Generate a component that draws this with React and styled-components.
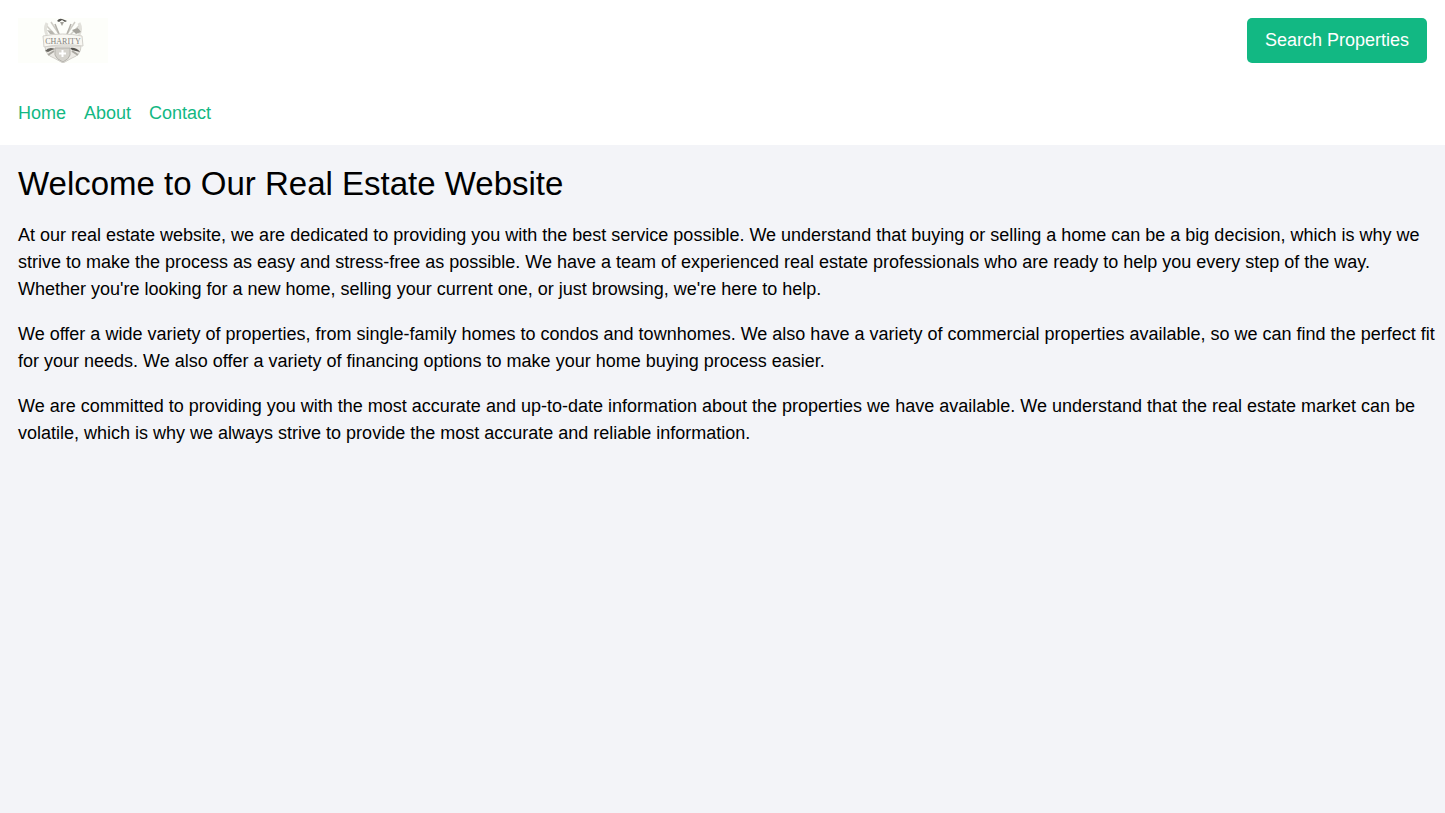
import * as React from 'react';
import styled, { createGlobalStyle } from 'styled-components';

const GlobalStyle = createGlobalStyle`
  *, *::before, *::after {
    box-sizing: border-box;
  }

  html {
    background-color: #f3f4f8;
  }

  body {
    margin: 0;
    color: #000;
    font-family: "Liberation Sans", Arial, sans-serif;
    font-size: 18px;
    line-height: 27px;
  }
`;

const Header = styled.header`
  background-color: #fff;
`;

const TopBar = styled.div`
  display: flex;
  align-items: center;
  justify-content: space-between;
  padding: 18px;
`;

const Logo = styled.svg`
  display: block;
  width: 90px;
  height: 45px;
`;

const SearchButton = styled.button`
  padding: 9px 18px;
  border: 0;
  border-radius: 5px;
  background-color: #12b883;
  color: #fff;
  font: inherit;
  cursor: pointer;
`;

const Nav = styled.nav`
  display: flex;
  gap: 18px;
  padding: 19px 18px 18px;
`;

const NavLink = styled.a`
  color: #12b883;
  text-decoration: none;
`;

const Main = styled.main`
  padding: 18px 9px 18px 18px;
`;

const Title = styled.h1`
  margin: 0 0 18px;
  font-size: 33px;
  font-weight: 400;
  line-height: 41px;
`;

const Paragraph = styled.p`
  margin: 0 0 18px;
`;

const LINKS = ['Home', 'About', 'Contact'];

const PARAGRAPHS = [
  "At our real estate website, we are dedicated to providing you with the best service possible. We understand that buying or selling a home can be a big decision, which is why we strive to make the process as easy and stress-free as possible. We have a team of experienced real estate professionals who are ready to help you every step of the way. Whether you're looking for a new home, selling your current one, or just browsing, we're here to help.",
  'We offer a wide variety of properties, from single-family homes to condos and townhomes. We also have a variety of commercial properties available, so we can find the perfect fit for your needs. We also offer a variety of financing options to make your home buying process easier.',
  'We are committed to providing you with the most accurate and up-to-date information about the properties we have available. We understand that the real estate market can be volatile, which is why we always strive to provide the most accurate and reliable information.',
];

const CharityLogo = () => (
  <Logo viewBox="0 0 90 45" role="img" aria-label="Charity">
    <rect width="90" height="45" fill="#fdfefa" />
    {/* tools crossed behind the shield */}
    <g fill="none" stroke="#cfcdc6" strokeWidth="1.5">
      <path d="M28 7l11 12M33 4l8 12M62 7L50 19M57 4l-8 12" />
      <path d="M29 5q-3 6 0 12M61 5q3 6 0 12" stroke="#e2e1db" strokeWidth="3" />
      <path d="M37 6l4 10M53 6l-4 10" stroke="#b3b1aa" />
    </g>
    <path d="M39 3q2-3 5-2t5 2l-2 1-3-2-3 2z" fill="#55544f" />
    <path d="M42 4h4l-2 4z" fill="#a09e97" />
    <path d="M54 12l6-2 3 4-5 2z" fill="#a5a39c" />
    <path d="M29 12l5 1 3 4-5-1z" fill="#b8b6af" />
    {/* shield */}
    <path d="M27 28q0 9 9 12l9 5 9-5q9-3 9-12z" fill="#eceae5" stroke="#d0cec8" />
    <path d="M27 33q4-5 10-2l-3 1-4 2z" fill="#66645e" />
    <path d="M52 30q6-1 10 4l-4-1-4-1z" fill="#55534e" />
    <path d="M30 37l6-4M60 37l-6-4" stroke="#aaa8a1" strokeWidth="2" />
    <path d="M37 30h15v7q-1 4-7 7-7-3-8-7z" fill="#d5d3cd" stroke="#b4b2ac" />
    <path d="M44.500 32v7M41 35.500h7" stroke="#fff" strokeWidth="2" />
    {/* ribbon */}
    <path d="M25 18q20-4 39 0l1 10q-20-3-39 1z" fill="#f8f7f2" stroke="#d2d0ca" />
    <text
      x="45"
      y="26"
      textAnchor="middle"
      fill="#85837c"
      fontFamily="Liberation Serif, serif"
      fontSize="8"
    >
      CHARITY
    </text>
  </Logo>
);

const App = () => (
  <>
    <GlobalStyle />
    <Header>
      <TopBar>
        <CharityLogo />
        <SearchButton type="button">Search Properties</SearchButton>
      </TopBar>
      <Nav>
        {LINKS.map((label) => (
          <NavLink key={label} href={`#${label.toLowerCase()}`}>
            {label}
          </NavLink>
        ))}
      </Nav>
    </Header>
    <Main>
      <Title>Welcome to Our Real Estate Website</Title>
      {PARAGRAPHS.map((text) => (
        <Paragraph key={text}>{text}</Paragraph>
      ))}
    </Main>
  </>
);

export default App;
